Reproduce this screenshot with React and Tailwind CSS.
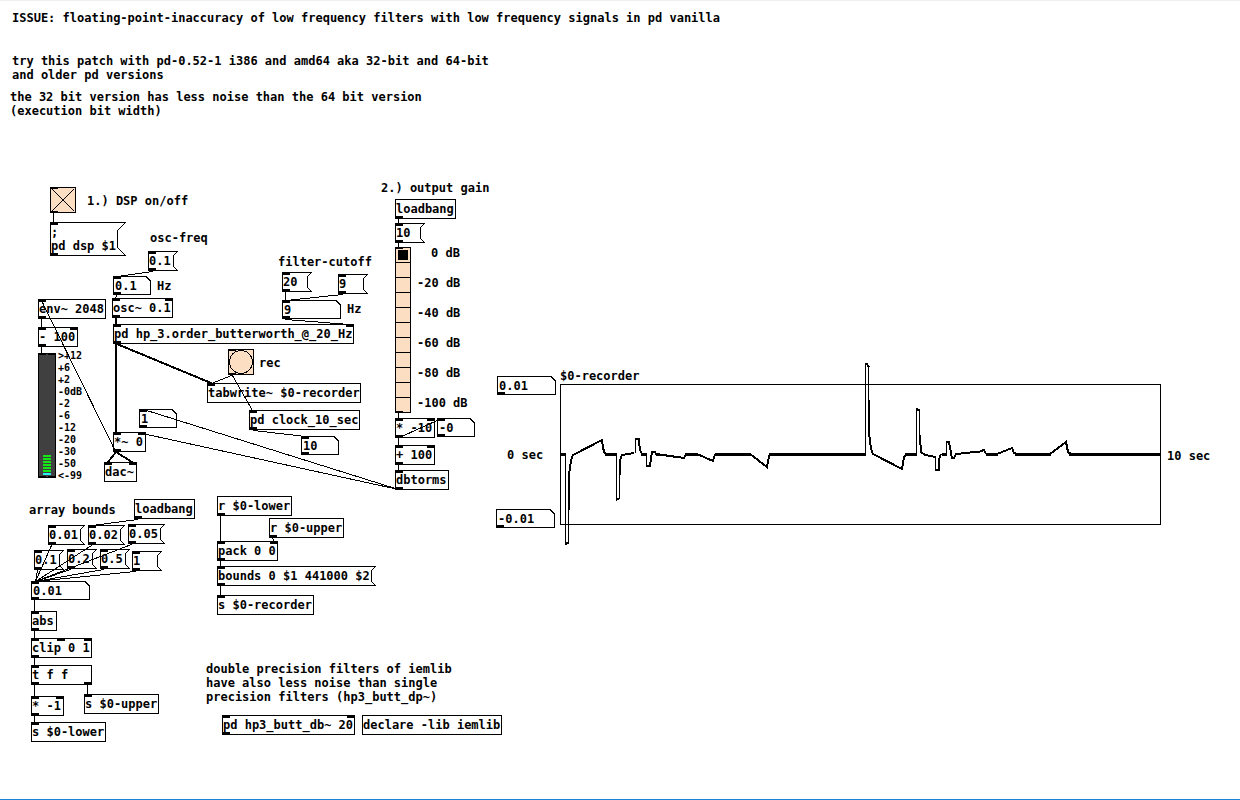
import React from "react";

const OUTLINE = "pointer-events-none absolute inset-0 h-full w-full";

function frame({ x, y, w, h }) {
  return { left: x, top: y, width: w, height: h };
}

function Ports({ h, ins = [], outs = [], size = 3 }) {
  return (
    <>
      {ins.map((p) => (
        <rect key={"i" + p} x={p} y={0} width={8} height={size} fill="black" />
      ))}
      {outs.map((p) => (
        <rect key={"o" + p} x={p} y={h - size} width={8} height={size} fill="black" />
      ))}
    </>
  );
}

function Outline({ node, points }) {
  return (
    <svg className={OUTLINE} shapeRendering="crispEdges" aria-hidden="true">
      <polygon points={points} fill="white" stroke="black" strokeWidth={1} />
      <Ports {...node} />
    </svg>
  );
}

function rectPoints(w, h) {
  return `0.5,0.5 ${w - 0.5},0.5 ${w - 0.5},${h - 0.5} 0.5,${h - 0.5}`;
}

function ObjectBox(node) {
  return (
    <div className="absolute" style={frame(node)}>
      <Outline node={node} points={rectPoints(node.w, node.h)} />
      <span className="relative block whitespace-pre pl-px pt-[3px]">{node.text}</span>
    </div>
  );
}

function MessageBox(node) {
  const { w, h } = node;
  const d = Math.floor((h - 1) / 4);
  const points = `0.5,0.5 ${w - 0.5},0.5 ${w - 0.5 - d},${d + 0.5} ${w - 0.5 - d},${h - 0.5 - d} ${w - 0.5},${h - 0.5} 0.5,${h - 0.5}`;
  return (
    <button type="button" className="absolute flex items-start text-left" style={frame(node)}>
      <Outline node={node} points={points} />
      <span className="relative block whitespace-pre pl-px pt-[3px]">{node.text}</span>
    </button>
  );
}

function NumberBox(node) {
  const { w, h } = node;
  const points = `0.5,0.5 ${w - 5},0.5 ${w - 0.5},5 ${w - 0.5},${h - 0.5} 0.5,${h - 0.5}`;
  return (
    <div className="absolute" style={frame(node)}>
      <Outline node={node} points={points} />
      <input
        type="text"
        aria-label={node.label}
        defaultValue={node.text}
        className="relative block h-[17px] w-full bg-transparent pl-[2px] pt-[3px] outline-none"
      />
    </div>
  );
}

const objects = [
  { text: "env~ 2048", x: 38, y: 299, w: 68, h: 20, ins: [0], outs: [0] },
  { text: "osc~ 0.1", x: 112, y: 298, w: 61, h: 20, ins: [0, 53], outs: [0] },
  { text: "- 100", x: 38, y: 327, w: 40, h: 20, ins: [0, 32], outs: [0] },
  { text: "pd hp_3.order_butterworth_@_20_Hz", x: 113, y: 324, w: 241, h: 20, ins: [0, 233], outs: [0] },
  { text: "*~ 0", x: 113, y: 432, w: 33, h: 20, ins: [0, 25], outs: [0] },
  { text: "dac~", x: 104, y: 462, w: 33, h: 20, ins: [0, 25] },
  { text: "tabwrite~ $0-recorder", x: 207, y: 383, w: 154, h: 20, ins: [0] },
  { text: "pd clock_10_sec", x: 249, y: 410, w: 111, h: 20, ins: [0], outs: [0] },
  { text: "loadbang", x: 395, y: 199, w: 61, h: 20, outs: [0] },
  { text: "* -10", x: 395, y: 418, w: 40, h: 20, ins: [0, 32], outs: [0] },
  { text: "+ 100", x: 395, y: 445, w: 40, h: 20, ins: [0, 32], outs: [0] },
  { text: "dbtorms", x: 395, y: 470, w: 54, h: 20, ins: [0], outs: [0] },
  { text: "loadbang", x: 134, y: 499, w: 61, h: 20, outs: [0] },
  { text: "abs", x: 31, y: 611, w: 26, h: 20, ins: [0], outs: [0] },
  { text: "clip 0 1", x: 31, y: 638, w: 61, h: 20, ins: [0, 26, 53], outs: [0] },
  { text: "t f f", x: 31, y: 665, w: 61, h: 20, ins: [0], outs: [0, 53] },
  { text: "* -1", x: 31, y: 696, w: 33, h: 20, ins: [0, 25], outs: [0] },
  { text: "s $0-upper", x: 84, y: 694, w: 75, h: 20, ins: [0] },
  { text: "s $0-lower", x: 31, y: 722, w: 75, h: 20, ins: [0] },
  { text: "r $0-lower", x: 217, y: 496, w: 75, h: 20, outs: [0] },
  { text: "r $0-upper", x: 269, y: 518, w: 75, h: 20, outs: [0] },
  { text: "pack 0 0", x: 217, y: 541, w: 61, h: 20, ins: [0, 53], outs: [0] },
  { text: "s $0-recorder", x: 217, y: 595, w: 97, h: 20, ins: [0] },
  { text: "pd hp3_butt_db~ 20", x: 222, y: 715, w: 133, h: 20, ins: [0, 125], outs: [0] },
  { text: "declare -lib iemlib", x: 362, y: 715, w: 140, h: 20 },
];

const messages = [
  { text: ";\npd dsp $1", x: 50, y: 222, w: 76, h: 34 },
  { text: "0.1", x: 148, y: 251, w: 30, h: 20 },
  { text: "20", x: 282, y: 272, w: 30, h: 20 },
  { text: "9", x: 338, y: 274, w: 30, h: 20 },
  { text: "10", x: 395, y: 223, w: 30, h: 20 },
  { text: "0.01", x: 48, y: 525, w: 37, h: 20 },
  { text: "0.02", x: 88, y: 525, w: 37, h: 20 },
  { text: "0.05", x: 128, y: 524, w: 37, h: 20 },
  { text: "0.1", x: 34, y: 550, w: 30, h: 20 },
  { text: "0.2", x: 67, y: 549, w: 30, h: 20 },
  { text: "0.5", x: 100, y: 549, w: 30, h: 20 },
  { text: "1", x: 132, y: 551, w: 30, h: 20 },
  { text: "bounds 0 $1 441000 $2", x: 217, y: 566, w: 159, h: 20 },
];

const numbers = [
  { label: "Oscillator frequency", text: "0.1", x: 113, y: 276, w: 38, h: 19, ins: [0], outs: [0] },
  { label: "Gain factor", text: "1", x: 139, y: 409, w: 38, h: 19, ins: [0], outs: [0] },
  { label: "Filter cutoff", text: "9", x: 282, y: 300, w: 59, h: 19, ins: [0], outs: [0] },
  { label: "Clock seconds", text: "10", x: 301, y: 436, w: 38, h: 19, ins: [0], outs: [0] },
  { label: "Gain in dB", text: "-0", x: 437, y: 418, w: 38, h: 19, ins: [0], outs: [0] },
  { label: "Array bound", text: "0.01", x: 31, y: 581, w: 59, h: 19, ins: [0], outs: [0] },
  { label: "Upper bound", text: "0.01", x: 497, y: 376, w: 59, h: 19, outs: [0] },
  { label: "Lower bound", text: "-0.01", x: 496, y: 509, w: 59, h: 19, outs: [0] },
];

const comments = [
  { x: 12, y: 11, text: "ISSUE: floating-point-inaccuracy of low frequency filters with low frequency signals in pd vanilla" },
  { x: 12, y: 54, text: "try this patch with pd-0.52-1 i386 and amd64 aka 32-bit and 64-bit\nand older pd versions" },
  { x: 10, y: 90, text: "the 32 bit version has less noise than the 64 bit version\n(execution bit width)" },
  { x: 150, y: 231, text: "osc-freq" },
  { x: 157, y: 279, text: "Hz" },
  { x: 278, y: 255, text: "filter-cutoff" },
  { x: 347, y: 302, text: "Hz" },
  { x: 381, y: 181, text: "2.) output gain" },
  { x: 29, y: 503, text: "array bounds" },
  { x: 507, y: 448, text: "0 sec" },
  { x: 1167, y: 449, text: "10 sec" },
  { x: 560, y: 369, text: "$0-recorder" },
  { x: 206, y: 662, text: "double precision filters of iemlib\nhave also less noise than single\nprecision filters (hp3_butt_dp~)" },
];

const wires = [
  [53, 213, 53, 222],
  [152, 271, 117, 276],
  [116, 295, 115, 298],
  [41, 319, 41, 327],
  [41, 347, 41, 353],
  [115, 451, 41, 300],
  [398, 489, 143, 409],
  [398, 489, 142, 433],
  [285, 292, 285, 300],
  [342, 294, 286, 300],
  [285, 319, 349, 324],
  [231, 375, 211, 383],
  [232, 375, 252, 410],
  [253, 430, 305, 436],
  [398, 219, 398, 223],
  [398, 243, 398, 247],
  [398, 413, 398, 418],
  [398, 438, 398, 445],
  [398, 465, 398, 470],
  [399, 437, 441, 418],
  [137, 519, 92, 525],
  [51, 545, 35, 581],
  [91, 545, 35, 581],
  [131, 544, 35, 581],
  [37, 570, 35, 581],
  [70, 569, 35, 581],
  [103, 569, 35, 581],
  [135, 571, 35, 581],
  [34, 600, 34, 611],
  [34, 631, 34, 638],
  [34, 658, 34, 665],
  [34, 685, 34, 696],
  [34, 716, 34, 722],
  [87, 685, 87, 694],
  [220, 516, 220, 541],
  [272, 538, 274, 541],
  [220, 561, 220, 566],
  [220, 586, 220, 595],
];

const signalWires = [
  [116, 318, 116, 324],
  [116, 344, 116, 432],
  [117, 344, 211, 383],
  [116, 452, 108, 462],
  [116, 452, 132, 462],
];

const levels = ["0 dB", "", "-20 dB", "", "-40 dB", "", "-60 dB", "", "-80 dB", "", "-100 dB"];
const vuScale = [">+12", "+6", "+2", "-0dB", "-2", "-6", "-12", "-20", "-30", "-50", "<-99"];

function DspToggle() {
  return (
    <div className="absolute left-[50px] top-[187px] flex items-center gap-[11px]">
      <span className="relative block size-[26px]">
        <input
          id="dsp"
          type="checkbox"
          defaultChecked
          className="peer block size-[26px] appearance-none border border-black bg-[#fcdfc3]"
        />
        <svg
          className="pointer-events-none absolute inset-0 hidden size-[26px] peer-checked:block"
          shapeRendering="crispEdges"
          aria-hidden="true"
        >
          <path d="M2 2 L24 24 M24 2 L2 24" stroke="black" strokeWidth="1" />
        </svg>
        <svg className="pointer-events-none absolute inset-0 size-[26px]" aria-hidden="true">
          <Ports h={26} ins={[0]} outs={[0]} size={2} />
        </svg>
      </span>
      <label htmlFor="dsp" className="whitespace-pre pt-[2px]">1.) DSP on/off</label>
    </div>
  );
}

function RecordBang() {
  return (
    <div className="absolute left-[228px] top-[349px] flex items-center gap-[5px]">
      <button id="rec" type="button" className="block size-[26px]">
        <svg className="block size-[26px]" shapeRendering="crispEdges" aria-hidden="true">
          <rect x="0.5" y="0.5" width="25" height="25" fill="#fcdfc3" stroke="black" />
          <circle cx="13" cy="13" r="11.5" fill="none" stroke="black" />
          <Ports h={26} ins={[0]} outs={[0]} size={2} />
        </svg>
      </button>
      <label htmlFor="rec" className="pt-[2px]">rec</label>
    </div>
  );
}

function GainRadio() {
  return (
    <fieldset className="absolute left-[395px] top-[247px]" aria-label="Output gain">
      {levels.map((level, i) => (
        <div key={i} className="flex h-[15px] items-start gap-[6px]">
          <input
            id={"gain" + i}
            type="radio"
            name="gain"
            defaultChecked={i === 0}
            aria-label={-10 * i + " dB"}
            className="block size-[16px] shrink-0 appearance-none border border-black bg-[#fcdfc3] checked:bg-black checked:shadow-[inset_0_0_0_2px_#fcdfc3]"
          />
          <label
            htmlFor={"gain" + i}
            className={i === 0 ? "whitespace-pre pl-[14px] leading-[12px]" : "whitespace-pre leading-[12px]"}
          >
            {level}
          </label>
        </div>
      ))}
      <svg className="pointer-events-none absolute left-0 top-0 h-[166px] w-[16px]" aria-hidden="true">
        <Ports h={166} ins={[0]} outs={[0]} size={2} />
      </svg>
    </fieldset>
  );
}

function VuMeter() {
  return (
    <div className="absolute left-[38px] top-[353px]">
      <svg className="block h-[125px] w-[18px]" shapeRendering="crispEdges" role="img" aria-label="Level meter">
        <rect x="0.5" y="0.5" width="17" height="124" fill="#404040" stroke="black" />
        {[102, 105, 108, 111, 114, 117].map((y) => (
          <rect key={y} x="5" y={y} width="8" height="2" fill="#14e814" />
        ))}
        <rect x="5" y="120" width="8" height="2" fill="#28f4f4" />
        <Ports h={125} ins={[0, 10]} outs={[0, 10]} size={2} />
      </svg>
      <ul className="absolute left-[20px] top-[-3px] text-[10px] leading-[12px]">
        {vuScale.map((s) => (
          <li key={s}>{s}</li>
        ))}
      </ul>
    </div>
  );
}

function RecorderGraph() {
  return (
    <svg
      className="pointer-events-none absolute left-[560px] top-[354px] h-[201px] w-[601px]"
      viewBox="560 354 601 201"
      shapeRendering="crispEdges"
      fill="none"
      stroke="black"
      role="img"
      aria-label="Recorded signal"
    >
      <rect x="560.5" y="384.5" width="600" height="140" />
      <path
        strokeWidth="3"
        d="M560 454.500H566 M605 454.500H617 M641 454.500H647 M656 454.500H660 M685 454.500H698 M715 454.500H751 M769 454.500H866 M905 454.500H917 M942 454.500H947 M986 454.500H998 M1015 454.500H1051 M1069 454.500H1160"
      />
      <path
        strokeWidth="1"
        d="M565.500 454V545 M568.500 543V510 M616.500 454V500 M619.500 499V475 M635.500 453V438 M646.500 454V466 M865.500 454V363 M868.500 366V400 M916.500 454V408 M919.500 410V435 M935.500 456V470 M946.500 454V442"
      />
      <path
        strokeWidth="2"
        d="M565 545L567 543H569 M569 510V475L571 460L573 455L602 440L603 448L605 454
           M616 500L620 498 M620 475V460L622 455L634 453 M635 439H640 M639 439V444L641 453
           M646 466H650L652 452H655L656 454L684 458L686 454 M697 454L713 461L715 454
           M750 454L767 467L769 456L772 454
           M866 363L869 367 M869 400V433L871 449L873 454L902 469L904 457L907 454
           M917 409L920 411 M920 435V438L921 452L925 455L936 457 M935 470H940 M939 470V459L941 454
           M946 442H949L951 453L952 458H954L956 454L980 451.500L984 450L986 454
           M997 454L1012 448L1014 453L1017 454 M1050 454L1066 442L1068 452L1071 454"
      />
    </svg>
  );
}

function Wires() {
  return (
    <svg
      className="pointer-events-none absolute inset-0 h-full w-full"
      shapeRendering="crispEdges"
      stroke="black"
      strokeLinecap="square"
      aria-hidden="true"
    >
      {wires.map(([a, b, c, d], i) => (
        <line key={i} x1={a + 0.5} y1={b + 0.5} x2={c + 0.5} y2={d + 0.5} />
      ))}
      {signalWires.map(([a, b, c, d], i) => (
        <line key={"s" + i} x1={a} y1={b} x2={c} y2={d} strokeWidth="2" />
      ))}
    </svg>
  );
}

export default function App() {
  return (
    <main className="relative flex min-h-screen w-full flex-col justify-between overflow-hidden bg-white font-['DejaVu_Sans_Mono',monospace] text-[12px] font-bold leading-[14px] text-black">
      <div className="h-px w-full bg-[#f0f0f0]" />
      {comments.map((c) => (
        <p key={c.x + "-" + c.y} className="absolute whitespace-pre" style={{ left: c.x, top: c.y }}>
          {c.text}
        </p>
      ))}
      <DspToggle />
      {objects.map((n) => (
        <ObjectBox key={n.x + "-" + n.y} {...n} />
      ))}
      {messages.map((n) => (
        <MessageBox key={n.x + "-" + n.y} {...n} ins={[0]} outs={[0]} />
      ))}
      {numbers.map((n) => (
        <NumberBox key={n.x + "-" + n.y} {...n} />
      ))}
      <RecordBang />
      <GainRadio />
      <VuMeter />
      <RecorderGraph />
      <Wires />
      <div className="h-px w-full bg-[#1883d7]" />
    </main>
  );
}
